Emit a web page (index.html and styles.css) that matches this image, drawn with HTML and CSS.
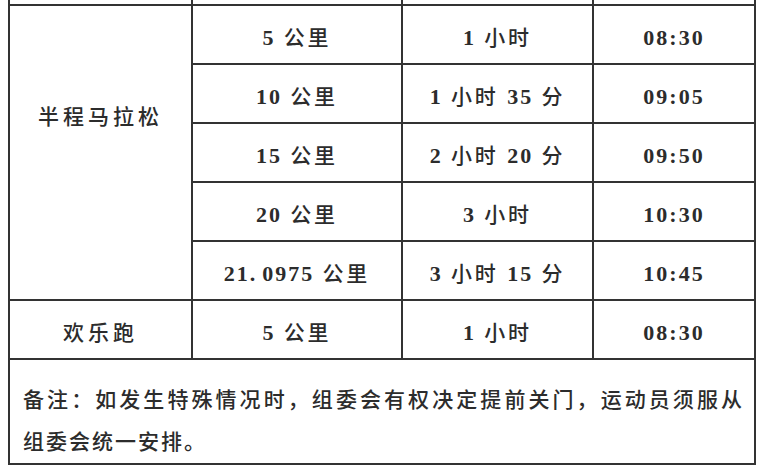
FILE: index.html
```html
<!DOCTYPE html>
<html lang="zh-CN">
<head>
<meta charset="utf-8">
<title>关门时间</title>
<link rel="stylesheet" href="styles.css">
</head>
<body>
<table class="schedule">
  <tr class="row-cut">
    <td class="c1"></td><td class="c2"></td><td class="c3"></td><td class="c4"></td>
  </tr>
  <tr class="row">
    <td class="group" rowspan="5">半程马拉松</td>
    <td><span class="n">5</span> 公里</td><td><span class="n">1</span> 小时</td><td><span class="n">08:30</span></td>
  </tr>
  <tr class="row">
    <td><span class="n">10</span> 公里</td><td><span class="n">1</span> 小时 <span class="n">35</span> 分</td><td><span class="n">09:05</span></td>
  </tr>
  <tr class="row">
    <td><span class="n">15</span> 公里</td><td><span class="n">2</span> 小时 <span class="n">20</span> 分</td><td><span class="n">09:50</span></td>
  </tr>
  <tr class="row">
    <td><span class="n">20</span> 公里</td><td><span class="n">3</span> 小时</td><td><span class="n">10:30</span></td>
  </tr>
  <tr class="row">
    <td><span class="n">21.<span class="gap"></span>0975</span> 公里</td><td><span class="n">3</span> 小时 <span class="n">15</span> 分</td><td><span class="n">10:45</span></td>
  </tr>
  <tr class="row">
    <td class="group-single">欢乐跑</td>
    <td><span class="n">5</span> 公里</td><td><span class="n">1</span> 小时</td><td><span class="n">08:30</span></td>
  </tr>
  <tr class="row-note">
    <td class="note" colspan="4">
      <div class="note-line note-full">备注：如发生特殊情况时，组委会有权决定提前关门，运动员须服从</div>
      <div class="note-line">组委会统一安排。</div>
    </td>
  </tr>
</table>
</body>
</html>
```

FILE: styles.css
```css
html, body {
  margin: 0;
  padding: 0;
  background: #ffffff;
}

body {
  font-family: "Liberation Serif", "Noto Sans CJK SC", serif;
  color: #2c2c2c;
}

.schedule {
  margin-left: 8px;
  border-collapse: separate;
  border-spacing: 0;
  table-layout: fixed;
  border-left: 2px solid #333333;
  width: 748px;
}

.schedule td {
  box-sizing: border-box;
  padding: 0;
  border-right: 2px solid #333333;
  border-bottom: 2px solid #333333;
  text-align: center;
  vertical-align: middle;
  font-size: 21px;
  font-weight: 500;
  line-height: 30px;
  padding-top: 6px;
  letter-spacing: 3px;
}

.n {
  font-weight: 700;
  font-size: 22px;
  letter-spacing: 2px;
}

.gap {
  display: inline-block;
  width: 5px;
}

.schedule .row-cut td {
  padding: 0;
  height: 6px;
  line-height: 0;
}

.c1 { width: 183px; }
.c2 { width: 210px; }
.c3 { width: 191px; }
.c4 { width: 162px; }

.row {
  height: 59px;
}

.schedule td.group {
  vertical-align: top;
  padding-top: 96px;
  letter-spacing: 4px;
}

.schedule td.group-single {
  letter-spacing: 4px;
}

.row-note {
  height: 104px;
}

.schedule td.note {
  text-align: left;
  vertical-align: top;
  padding: 19px 12px 0 13px;
  line-height: 42px;
  letter-spacing: 2px;
}

.note-line {
  white-space: nowrap;
}

.note-full {
  letter-spacing: 0;
  text-align: justify;
  text-align-last: justify;
  white-space: normal;
}
```
